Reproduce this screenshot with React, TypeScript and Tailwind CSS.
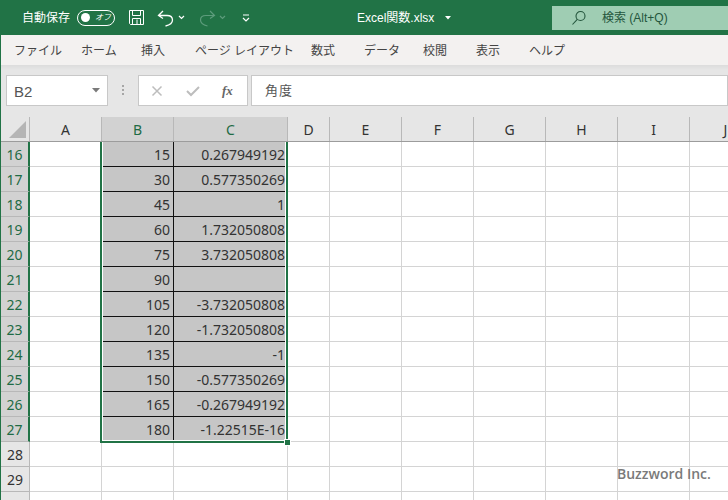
const cols = ['A', 'B', 'C', 'D', 'E', 'F', 'G', 'H', 'I', 'J'];
const tabs = [
  { label: 'ファイル', w: 'w-[67px]' },
  { label: 'ホーム', w: 'w-[60px]' },
  { label: '挿入', w: 'w-[54px]' },
  { label: 'ページ レイアウト', w: 'w-[116px]' },
  { label: '数式', w: 'w-[53px]' },
  { label: 'データ', w: 'w-[59px]' },
  { label: '校閲', w: 'w-[53px]' },
  { label: '表示', w: 'w-[53px]' },
  { label: 'ヘルプ', w: 'w-[60px]' },
];
const rows: [number, string, string][] = [
  [16, '15', '0.267949192'],
  [17, '30', '0.577350269'],
  [18, '45', '1'],
  [19, '60', '1.732050808'],
  [20, '75', '3.732050808'],
  [21, '90', ''],
  [22, '105', '-3.732050808'],
  [23, '120', '-1.732050808'],
  [24, '135', '-1'],
  [25, '150', '-0.577350269'],
  [26, '165', '-0.267949192'],
  [27, '180', '-1.22515E-16'],
  [28, '', ''],
  [29, '', ''],
  [30, '', ''],
];
const gridCols = 'grid grid-cols-[29px_72px_72px_114px_42px_72px_72px_72px_72px_72px_72px]';

function TitleBar() {
  return (
    <div className="h-[35px] bg-[#217346] flex items-center text-white shrink-0 relative">
      <span className="ml-[22px] text-[12px] w-[50px] whitespace-nowrap">自動保存</span>
      <div className="ml-[5px] w-[38px] h-[16px] rounded-full border border-white flex items-center pl-[3px] gap-[5px]">
        <div className="w-[9px] h-[9px] rounded-full bg-white shrink-0" />
        <span className="text-[8px] italic leading-none whitespace-nowrap">オフ</span>
      </div>
      <svg className="ml-[13px]" width="17" height="17" viewBox="0 0 17 17" fill="none" stroke="white" strokeWidth="1">
        <path d="M1.500 1.500h14v14h-13l-1-1z" />
        <path d="M4.500 1.500v5h8v-5M4.500 15.500v-6h8v6M9 10.500v5" />
      </svg>
      <svg className="ml-[12px]" width="17" height="18" viewBox="0 0 17 18" fill="none" stroke="white" strokeWidth="1.300">
        <path d="M6 2 1.500 6.500 6 9.500M1.500 6.500H10c3.500 0 5.500 1.800 5.500 4.500S13 16 8.500 17" />
      </svg>
      <svg className="ml-[4px]" width="7" height="5" viewBox="0 0 7 5" fill="none" stroke="white" strokeWidth="1.200">
        <path d="M1 1l2.500 2.500L6 1" />
      </svg>
      <svg className="ml-[14px]" width="17" height="18" viewBox="0 0 17 18" fill="none" stroke="#5d9c7c" strokeWidth="1.200">
        <path d="M11 2l4.500 4.500L11 9.500M15.500 6.500H7C3.500 6.500 1.500 8.300 1.500 11S4 16 8.500 17" />
      </svg>
      <svg className="ml-[3px]" width="7" height="5" viewBox="0 0 7 5" fill="none" stroke="#5d9c7c" strokeWidth="1.200">
        <path d="M1 1l2.500 2.500L6 1" />
      </svg>
      <svg className="ml-[16px]" width="8" height="8" viewBox="0 0 8 8" fill="none" stroke="white" strokeWidth="1.200">
        <path d="M1 1h6M1 4l3 3 3-3" />
      </svg>
      <span className="absolute left-[357px] top-[9px] text-[12px] whitespace-nowrap">Excel関数.xlsx</span>
      <svg className="absolute left-[445px] top-[16px]" width="6" height="4" viewBox="0 0 6 4" fill="white">
        <path d="M0 0h6L3 3.500z" />
      </svg>
      <div className="absolute left-[552px] top-[6px] w-[176px] h-[24px] bg-[#9fcdb3] flex items-center text-[#24563d]">
        <svg className="ml-[19px]" width="16" height="16" viewBox="0 0 16 16" fill="none" stroke="currentColor" strokeWidth="1.100">
          <circle cx="9.500" cy="6" r="4.500" />
          <path d="M6.300 9.300 1.500 14.500" />
        </svg>
        <span className="ml-[15px] text-[12px] whitespace-nowrap">検索 (Alt+Q)</span>
      </div>
    </div>
  );
}

function Ribbon() {
  return (
    <div className="h-[30px] bg-[#f3f1f0] flex items-center text-[12px] text-[#444] pl-[13px] pt-[2px] shrink-0 border-l border-[#217346]">
      {tabs.map(t => (
        <span key={t.label} className={`${t.w} whitespace-nowrap`}>{t.label}</span>
      ))}
    </div>
  );
}

function FormulaBar() {
  return (
    <div className="h-[52px] bg-[linear-gradient(#dcdcdc,#e6e6e6_5px)] flex items-start pt-[10px] pl-[5px] shrink-0 border-l border-[#217346]">
      <div className="w-[102px] h-[31px] bg-white border border-[#c8c8c8] flex items-center justify-between pl-[7px] pr-[7px] text-[15px] text-[#555]">
        <span className="pt-[4px]">B2</span>
        <svg width="8" height="5" viewBox="0 0 8 5" fill="#7a7a7a"><path d="M0 0h8L4 4.500z" /></svg>
      </div>
      <div className="w-[2px] ml-[14px] mt-[10px] h-[10px] flex flex-col justify-between">
        <div className="w-[2px] h-[2px] bg-[#a6a6a6]" />
        <div className="w-[2px] h-[2px] bg-[#a6a6a6]" />
        <div className="w-[2px] h-[2px] bg-[#a6a6a6]" />
      </div>
      <div className="ml-[14px] w-[110px] h-[31px] bg-white border border-[#c8c8c8] flex items-center relative">
        <svg className="ml-[12px]" width="12" height="12" viewBox="0 0 12 12" fill="none" stroke="#bdbdbd" strokeWidth="1.500">
          <path d="M1.500 1.500l9 9M10.500 1.500l-9 9" />
        </svg>
        <svg className="ml-[23px]" width="14" height="12" viewBox="0 0 14 12" fill="none" stroke="#bdbdbd" strokeWidth="2">
          <path d="M1 6l4 4 8-8" />
        </svg>
        <span className="ml-[22px] text-[13px] italic font-bold text-[#666] font-['Liberation_Serif',serif]">fx</span>
      </div>
      <div className="ml-[3px] flex-1 h-[31px] bg-white border border-[#c8c8c8] flex items-center pl-[13px] text-[13px] tracking-[1px] text-[#555]">
        角度
      </div>
    </div>
  );
}

function HeaderRow() {
  return (
    <div className={`${gridCols} h-[25px] bg-[#e6e6e6] border-b border-[#9c9c9c] text-[14px]`}>
      <div className="relative border-r border-[#b8b8b8]">
        <svg className="absolute right-[3px] bottom-[3px]" width="17" height="17" viewBox="0 0 17 17" fill="#b5b5b5">
          <path d="M17 0v17H0z" />
        </svg>
      </div>
      {cols.map(c => {
        const sel = c === 'B' || c === 'C';
        return (
          <div
            key={c}
            className={`flex items-center justify-center border-r border-[#b8b8b8] ${sel ? 'bg-[#d2d2d2] text-[#1f6b45]' : 'text-[#333]'}`}
          >
            {c}
          </div>
        );
      })}
    </div>
  );
}

function Sheet() {
  return (
    <div className="flex-1 relative overflow-hidden font-['Noto_Sans','Noto_Sans_CJK_JP',sans-serif] border-l border-[#217346]">
      <HeaderRow />
      {rows.map(([n, b, c]) => {
        const picked = n <= 27;
        return (
          <div key={n} className={`${gridCols} h-[25px] text-[14px] text-[#333]`}>
            <div
              className={`flex items-center justify-center border-b border-[#b8b8b8] ${picked ? 'bg-[#d2d2d2] text-[#1f6b45] border-r-2 border-r-[#217346]' : 'bg-[#e6e6e6] border-r'}`}
            >
              {n}
            </div>
            <div className="border-b border-r border-[#d4d4d4]" />
            <div className={`flex items-center justify-end pr-[3px] border-b border-r ${picked ? 'bg-[#c6c6c6] border-[#111]' : 'border-[#d4d4d4]'}`}>{b}</div>
            <div className={`flex items-center justify-end pr-[3px] border-b ${picked ? 'bg-[#c6c6c6] border-[#111]' : 'border-r border-[#d4d4d4]'}`}>{c}</div>
            {['D', 'E', 'F', 'G', 'H', 'I', 'J'].map(k => (
              <div key={k} className="border-b border-r border-[#d4d4d4]" />
            ))}
          </div>
        );
      })}
      {/* selection frame + fill handle */}
      <div className="absolute left-[99px] top-[25px] w-[188px] h-[301px] border-x-2 border-b-2 border-[#217346] pointer-events-none">
        <div className="w-full h-full border-x border-b border-white" />
        <div className="absolute right-[-4px] bottom-[-4px] w-[5px] h-[5px] bg-[#217346] outline outline-1 outline-white" />
      </div>
      <span className="absolute left-[616px] top-[346px] text-[14px] font-semibold text-[#7a7a7a] font-['Open_Sans',sans-serif] whitespace-nowrap">
        Buzzword Inc.
      </span>
    </div>
  );
}

export default function App() {
  return (
    <div className="w-[728px] h-[500px] flex flex-col overflow-hidden bg-white font-['Liberation_Sans','Noto_Sans_CJK_JP',sans-serif]">
      <TitleBar />
      <Ribbon />
      <FormulaBar />
      <Sheet />
    </div>
  );
}
